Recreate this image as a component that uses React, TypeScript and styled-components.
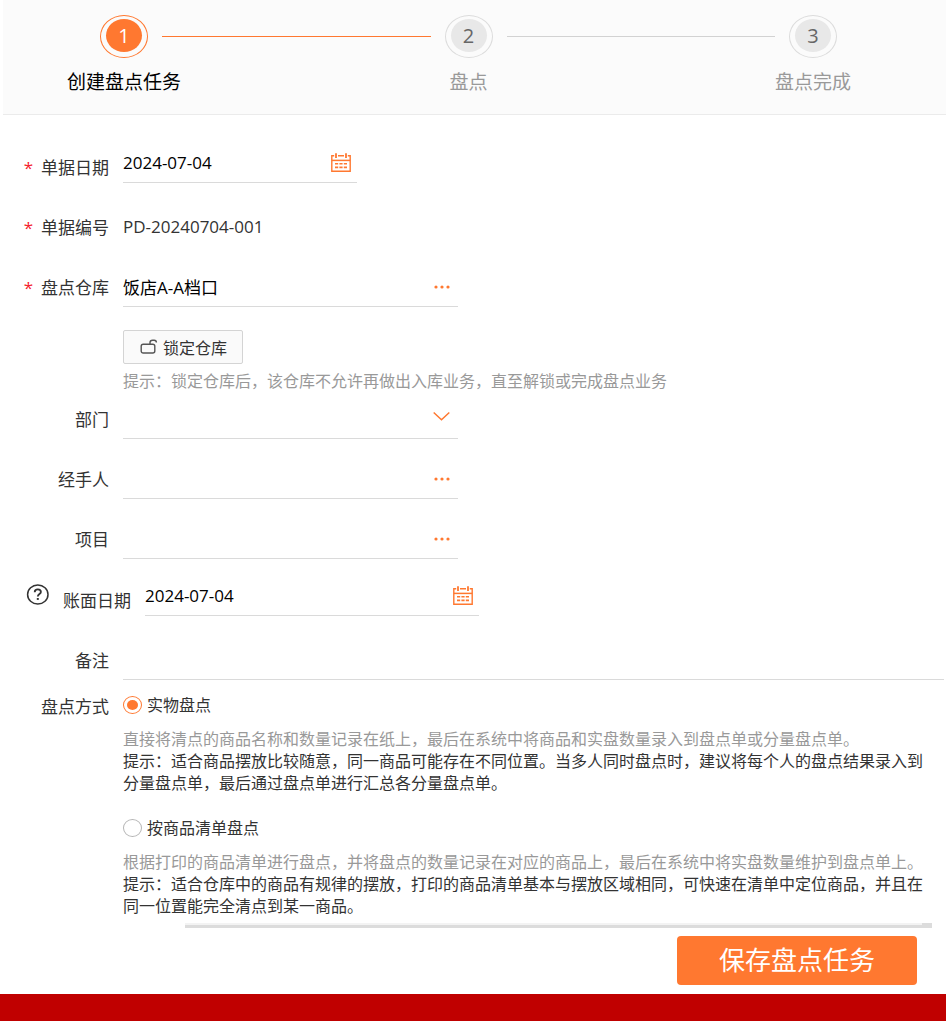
import React, { useState } from 'react';
import styled, { createGlobalStyle } from 'styled-components';

const ORANGE = '#ff7830';

const GlobalStyle = createGlobalStyle`
  *, *::before, *::after { box-sizing: border-box; }
  body { margin: 0; background: #fff; }
  body, button, input, select {
    font-family: "Open Sans", "Noto Sans CJK SC", sans-serif;
    color: #333;
  }
`;

const Page = styled.div`
  display: flex;
  flex-direction: column;
  min-height: 100vh;
`;

const Steps = styled.ol`
  display: flex;
  align-items: flex-start;
  margin: 0 0 28px 3px;
  padding: 15px 109px 18px 97px;
  list-style: none;
  background: #fbfbfb;
  border-bottom: 1px solid #ebebeb;
`;

const Step = styled.li`
  display: flex;
  flex-direction: column;
  align-items: center;
  flex: none;
  width: 48px;
`;

const StepRing = styled.span<{ $active?: boolean }>`
  display: flex;
  justify-content: center;
  width: 48px;
  height: 43px;
  padding-top: 3px;
  border: 1px solid ${p => (p.$active ? ORANGE : '#dcdcdc')};
  border-radius: 50%;
`;

const StepNumber = styled.span<{ $active?: boolean }>`
  width: 36px;
  height: 33px;
  border-radius: 50%;
  background: ${p => (p.$active ? ORANGE : '#e8e8e8')};
  color: ${p => (p.$active ? '#fff' : '#666')};
  font-size: 20px;
  line-height: 33px;
  text-align: center;
`;

const StepTitle = styled.span<{ $active?: boolean }>`
  margin-top: 11px;
  font-size: 19px;
  line-height: 27px;
  white-space: nowrap;
  color: ${p => (p.$active ? '#000' : '#999')};
`;

const StepLine = styled.li<{ $active?: boolean }>`
  flex: 1;
  height: 1px;
  margin: 21px 14px 0;
  background: ${p => (p.$active ? ORANGE : '#d2d2d2')};
`;

const Form = styled.form`
  display: flex;
  flex-direction: column;
`;

const Row = styled.div<{ $gap?: number }>`
  display: flex;
  align-items: flex-start;
  gap: 14px;
  margin-bottom: ${p => p.$gap ?? 20}px;
`;

const Label = styled.label<{ $drop?: boolean }>`
  flex: none;
  width: 109px;
  height: ${p => (p.$drop ? 44 : 40)}px;
  padding-top: ${p => (p.$drop ? 4 : 0)}px;
  font-size: 17px;
  line-height: 42px;
  text-align: right;
  white-space: nowrap;
`;

const Required = styled.span`
  margin-right: 8px;
  color: #f5222d;
`;

const HelpLabel = styled.div`
  display: flex;
  width: 131px;
  flex: none;
  padding-left: 26px;
  justify-content: space-between;

  ${Label} { width: auto; }
`;

const HelpButton = styled.button`
  display: flex;
  height: 22px;
  margin-top: 8px;
  padding: 0;
  border: 0;
  background: none;
`;

const Field = styled.div<{ $width?: number; $pad?: number }>`
  position: relative;
  display: flex;
  align-items: center;
  ${p => (p.$width ? `width: ${p.$width}px;` : 'flex: 1; margin-right: 2px;')}
  height: 40px;
  padding-right: ${p => p.$pad ?? 8}px;
  border-bottom: 1px solid #dadada;
`;

const TextInput = styled.input`
  flex: 1;
  min-width: 0;
  height: 38px;
  padding: 0;
  border: 0;
  outline: 0;
  background: transparent;
  font-size: 17px;
  color: #000;
`;

const Select = styled.select`
  flex: 1;
  height: 38px;
  border: 0;
  outline: 0;
  appearance: none;
  background: transparent;
  font-size: 17px;
`;

const Chevron = styled.svg`
  position: absolute;
  top: 12px;
  right: 8px;
  pointer-events: none;
`;

const IconButton = styled.button`
  display: flex;
  padding: 0;
  border: 0;
  background: none;
  cursor: pointer;
`;

const StaticValue = styled.output`
  font-size: 17px;
  line-height: 40px;
`;

const LockArea = styled.div`
  margin: 3px 0 7px 123px;
`;

const LockButton = styled.button`
  display: flex;
  align-items: center;
  gap: 5px;
  height: 34px;
  padding: 0 15px 0 16px;
  border: 1px solid #d4d4d4;
  border-radius: 2px;
  background: #fafafa;
  font-size: 16px;
  cursor: pointer;
`;

const Hint = styled.p`
  margin: 6px 0 0;
  font-size: 16px;
  line-height: 22px;
  color: #999;
`;

const MethodRow = styled.div`
  display: flex;
  gap: 14px;
  margin-top: -6px;
`;

const MethodLabel = styled.span`
  flex: none;
  width: 109px;
  font-size: 17px;
  line-height: 26px;
  text-align: right;
`;

const MethodOptions = styled.div`
  flex: 1;
  padding-right: 11px;
`;

const Option = styled.div`
  & + & { margin-top: 23px; }
`;

const RadioLabel = styled.label`
  display: flex;
  align-items: center;
  gap: 5px;
  font-size: 16px;
  line-height: 22px;
`;

const Radio = styled.input`
  appearance: none;
  width: 19px;
  height: 18px;
  margin: 0;
  border: 1px solid #b5b5b5;
  border-radius: 50%;
  background: #fff;

  &:checked {
    padding: 3px;
    border-color: ${ORANGE};
    background: ${ORANGE} content-box;
  }
`;

const Description = styled.p`
  margin: 12px 0 0;
  font-size: 16px;
  line-height: 22px;
`;

const Muted = styled.span`
  display: block;
  color: #999;
`;

const ScrollRail = styled.div`
  display: flex;
  justify-content: flex-end;
  height: 5px;
  margin: 6px 14px 0 185px;
  border-bottom: 3px solid #dcdcdc;
  background: #f3f3f3;
`;

const ScrollCap = styled.span`
  width: 10px;
  height: 2px;
  background: #dcdcdc;
`;

const Actions = styled.div`
  display: flex;
  justify-content: flex-end;
  padding: 8px 29px 9px 0;
`;

const SaveButton = styled.button`
  width: 240px;
  height: 49px;
  padding: 0;
  border: 0;
  border-radius: 4px;
  background: ${ORANGE};
  color: #fff;
  font-size: 26px;
  line-height: 49px;
  cursor: pointer;
`;

const Footer = styled.footer`
  flex: 1;
  min-height: 27px;
  background: #c00000;
`;

const CalendarIcon = () => (
  <svg width="20" height="19" viewBox="0 0 20 19" fill="none" stroke={ORANGE}>
    <path d="M3.2 2.8H.8v15.4h18.4V2.8h-2.4M7 2.8h6" strokeWidth="1.4" />
    <path d="M5 .3v4.6M15 .3v4.6" strokeWidth="1.8" />
    <path d="M.8 7.4h18.4" strokeWidth="1.5" />
    <path d="M4 10.8h3.2M8.4 10.8h3.2M12.8 10.8H16M4 14.4h3.2M8.4 14.4h3.2M12.8 14.4H16" strokeWidth="1.6" />
  </svg>
);

const DotsIcon = () => (
  <svg width="16" height="4" viewBox="0 0 16 4" fill={ORANGE}>
    <circle cx="2" cy="2" r="1.6" />
    <circle cx="8" cy="2" r="1.6" />
    <circle cx="14" cy="2" r="1.6" />
  </svg>
);

const UnlockIcon = () => (
  <svg width="18" height="17" viewBox="0 0 18 17" fill="none" stroke="#555" strokeWidth="1.4">
    <rect x="1.2" y="5.2" width="13.6" height="8.8" rx="2" />
    <path d="M10 5V3.6c0-1.6 1-2.4 2.6-2.4h1.6c1.4 0 2.2.8 2.2 2.4" />
  </svg>
);

const HelpIcon = () => (
  <svg width="23" height="21" viewBox="0 0 23 21" fill="none" stroke="#333" strokeWidth="1.5">
    <ellipse cx="11.8" cy="10.5" rx="10.2" ry="9.5" />
    <path d="M8.7 8.2c0-1.7 1.3-2.8 3.1-2.8s3.1 1 3.1 2.6c0 2.1-3.1 2.1-3.1 4.6" strokeWidth="1.8" />
    <path d="M11.8 14v1.9" strokeWidth="2" />
  </svg>
);

export default function App() {
  const [method, setMethod] = useState('physical');
  return (
    <Page>
      <GlobalStyle />
      <Steps>
        <Step aria-current="step">
          <StepRing $active><StepNumber $active>1</StepNumber></StepRing>
          <StepTitle $active>创建盘点任务</StepTitle>
        </Step>
        <StepLine $active aria-hidden />
        <Step>
          <StepRing><StepNumber>2</StepNumber></StepRing>
          <StepTitle>盘点</StepTitle>
        </Step>
        <StepLine aria-hidden />
        <Step>
          <StepRing><StepNumber>3</StepNumber></StepRing>
          <StepTitle>盘点完成</StepTitle>
        </Step>
      </Steps>

      <Form onSubmit={e => e.preventDefault()}>
        <Row>
          <Label $drop htmlFor="billDate"><Required>*</Required>单据日期</Label>
          <Field $width={234} $pad={6}>
            <TextInput id="billDate" defaultValue="2024-07-04" />
            <IconButton type="button" aria-label="选择单据日期"><CalendarIcon /></IconButton>
          </Field>
        </Row>
        <Row>
          <Label htmlFor="billNo"><Required>*</Required>单据编号</Label>
          <StaticValue id="billNo">PD-20240704-001</StaticValue>
        </Row>
        <Row>
          <Label htmlFor="warehouse"><Required>*</Required>盘点仓库</Label>
          <Field $width={335}>
            <TextInput id="warehouse" defaultValue="饭店A-A档口" />
            <IconButton type="button" aria-label="选择仓库"><DotsIcon /></IconButton>
          </Field>
        </Row>
        <LockArea>
          <LockButton type="button"><UnlockIcon />锁定仓库</LockButton>
          <Hint>提示：锁定仓库后，该仓库不允许再做出入库业务，直至解锁或完成盘点业务</Hint>
        </LockArea>
        <Row>
          <Label htmlFor="department">部门</Label>
          <Field $width={335}>
            <Select id="department" defaultValue=""><option value="" /></Select>
            <Chevron width="17" height="11" viewBox="0 0 17 11" fill="none" stroke={ORANGE} strokeWidth="1.5">
              <path d="M.7 1.5l7.8 7.3 7.8-7.3" />
            </Chevron>
          </Field>
        </Row>
        <Row>
          <Label htmlFor="handler">经手人</Label>
          <Field $width={335}>
            <TextInput id="handler" />
            <IconButton type="button" aria-label="选择经手人"><DotsIcon /></IconButton>
          </Field>
        </Row>
        <Row $gap={17}>
          <Label htmlFor="project">项目</Label>
          <Field $width={335}>
            <TextInput id="project" />
            <IconButton type="button" aria-label="选择项目"><DotsIcon /></IconButton>
          </Field>
        </Row>
        <Row>
          <HelpLabel>
            <HelpButton type="button" aria-label="帮助"><HelpIcon /></HelpButton>
            <Label $drop htmlFor="bookDate">账面日期</Label>
          </HelpLabel>
          <Field $width={334} $pad={6}>
            <TextInput id="bookDate" defaultValue="2024-07-04" />
            <IconButton type="button" aria-label="选择账面日期"><CalendarIcon /></IconButton>
          </Field>
        </Row>
        <Row>
          <Label htmlFor="remark">备注</Label>
          <Field>
            <TextInput id="remark" />
          </Field>
        </Row>
        <MethodRow role="radiogroup" aria-labelledby="methodLabel">
          <MethodLabel id="methodLabel">盘点方式</MethodLabel>
          <MethodOptions>
            <Option>
              <RadioLabel>
                <Radio type="radio" name="method" checked={method === 'physical'} onChange={() => setMethod('physical')} />
                实物盘点
              </RadioLabel>
              <Description>
                <Muted>直接将清点的商品名称和数量记录在纸上，最后在系统中将商品和实盘数量录入到盘点单或分量盘点单。</Muted>
                提示：适合商品摆放比较随意，同一商品可能存在不同位置。当多人同时盘点时，建议将每个人的盘点结果录入到分量盘点单，最后通过盘点单进行汇总各分量盘点单。
              </Description>
            </Option>
            <Option>
              <RadioLabel>
                <Radio type="radio" name="method" checked={method === 'list'} onChange={() => setMethod('list')} />
                按商品清单盘点
              </RadioLabel>
              <Description>
                <Muted>根据打印的商品清单进行盘点，并将盘点的数量记录在对应的商品上，最后在系统中将实盘数量维护到盘点单上。</Muted>
                提示：适合仓库中的商品有规律的摆放，打印的商品清单基本与摆放区域相同，可快速在清单中定位商品，并且在同一位置能完全清点到某一商品。
              </Description>
            </Option>
          </MethodOptions>
        </MethodRow>
        <ScrollRail><ScrollCap /></ScrollRail>
        <Actions>
          <SaveButton type="submit">保存盘点任务</SaveButton>
        </Actions>
      </Form>
      <Footer />
    </Page>
  );
}
